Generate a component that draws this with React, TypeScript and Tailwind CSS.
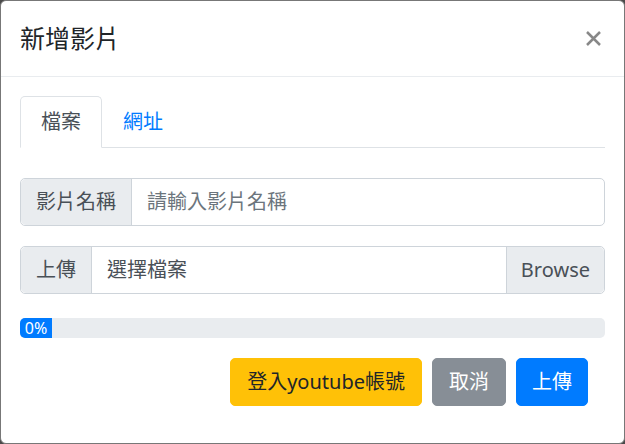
import React from 'react';

const font = { fontFamily: '"Noto Sans", "Noto Sans CJK TC", sans-serif' };

export default function App() {
  return (
    <div className="w-[625px] h-[444px] bg-[#4a4a4a]" style={font}>
      <div className="flex h-full flex-col rounded-[6px] border border-[#777] bg-white">
        {/* Header */}
        <div className="flex h-[76px] items-center justify-between border-b border-[#e9ecef] pl-[19px] pr-[21px]">
          <h5 className="text-[25px] leading-[37px] text-[#212529]">新增影片</h5>
          <button className="flex h-[20px] w-[20px] items-center justify-center">
            <svg width="15" height="15" viewBox="0 0 15 15">
              <path d="M1 1 L14 14 M14 1 L1 14" stroke="#888" strokeWidth="2.5" />
            </svg>
          </button>
        </div>

        {/* Body */}
        <div className="px-[19px] pt-[19px]">
          <div className="flex border-b border-[#dee2e6]">
            <div className="-mb-px rounded-t-[5px] border border-[#dee2e6] border-b-white px-[20px] py-[10px] text-[20px] leading-[30px] text-[#495057]">
              檔案
            </div>
            <div className="-mb-px border border-transparent px-[20px] py-[10px] text-[20px] leading-[30px] text-[#007bff]">
              網址
            </div>
          </div>

          <div className="mt-[30px] flex h-[48px] rounded-[5px] border border-[#ced4da] text-[20px]">
            <div className="flex items-center rounded-l-[5px] border-r border-[#ced4da] bg-[#e9ecef] px-[15px] text-[#495057]">
              影片名稱
            </div>
            <div className="flex flex-1 items-center px-[15px] text-[#6c757d]">請輸入影片名稱</div>
          </div>

          <div className="mt-[20px] flex h-[48px] rounded-[5px] border border-[#ced4da] text-[20px]">
            <div className="flex items-center rounded-l-[5px] border-r border-[#ced4da] bg-[#e9ecef] px-[15px] text-[#495057]">
              上傳
            </div>
            <div className="flex flex-1 items-center px-[15px] text-[#495057]">選擇檔案</div>
            <div className="flex items-center rounded-r-[5px] border-l border-[#ced4da] bg-[#e9ecef] px-[14px] text-[#495057]">
              Browse
            </div>
          </div>

          <div className="mt-[24px] flex h-[20px] overflow-hidden rounded-[5px] bg-[#e9ecef]">
            <div className="flex w-[32px] items-center justify-center bg-[#007bff] text-[16px] leading-[20px] text-white">
              0%
            </div>
          </div>

          <div className="mt-[20px] flex justify-end gap-[10px] pr-[17px] text-[20px]">
            <button className="h-[48px] rounded-[5px] border border-[#ffc107] bg-[#ffc107] px-[16px] leading-[30px] text-[#212529]">
              登入youtube帳號
            </button>
            <button className="h-[48px] rounded-[5px] border border-[#878e96] bg-[#878e96] px-[16px] leading-[30px] text-white">
              取消
            </button>
            <button className="h-[48px] rounded-[5px] border border-[#007bff] bg-[#007bff] px-[15px] leading-[30px] text-white">
              上傳
            </button>
          </div>
        </div>
      </div>
    </div>
  );
}
